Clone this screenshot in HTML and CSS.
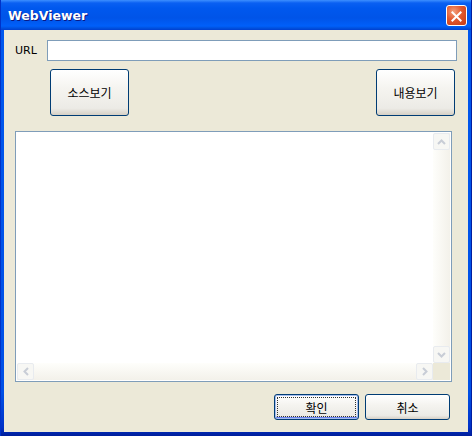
FILE: index.html
```html
<!DOCTYPE html>
<html lang="ko">
<head>
    <meta charset="UTF-8">
    <title>WebViewer</title>
    <link rel="stylesheet" href="styles.css">
</head>
<body>
    <div class="window">
        <div class="titlebar">
            <span class="title">WebViewer</span>
            <span class="close-button">
                <svg width="21" height="21" viewBox="0 0 21 21">
                    <path d="M6 6 L15 15 M15 6 L6 15" stroke="#fff" stroke-width="2.2" stroke-linecap="square"/>
                </svg>
            </span>
        </div>

        <div class="client">
            <div class="url-row">
                <span class="url-label">URL</span>
                <div class="url-input"></div>
            </div>

            <div class="view-row">
                <button class="btn btn-view">소스보기</button>
                <button class="btn btn-view">내용보기</button>
            </div>

            <div class="viewer">
                <div class="viewer-body"></div>
                <div class="vscroll">
                    <span class="arrow">
                        <svg width="9" height="6" viewBox="0 0 9 6"><path d="M1 5 L4.5 1.5 L8 5" fill="none" stroke="#c8cdd6" stroke-width="2"/></svg>
                    </span>
                    <span class="track"></span>
                    <span class="arrow">
                        <svg width="9" height="6" viewBox="0 0 9 6"><path d="M1 1 L4.5 4.5 L8 1" fill="none" stroke="#c8cdd6" stroke-width="2"/></svg>
                    </span>
                </div>
                <div class="hscroll">
                    <span class="arrow">
                        <svg width="6" height="9" viewBox="0 0 6 9"><path d="M5 1 L1.5 4.5 L5 8" fill="none" stroke="#c8cdd6" stroke-width="2"/></svg>
                    </span>
                    <span class="track"></span>
                    <span class="arrow">
                        <svg width="6" height="9" viewBox="0 0 6 9"><path d="M1 1 L4.5 4.5 L1 8" fill="none" stroke="#c8cdd6" stroke-width="2"/></svg>
                    </span>
                </div>
                <div class="corner"></div>
            </div>

            <div class="actions">
                <button class="btn btn-action btn-default"><span class="focus">확인</span></button>
                <button class="btn btn-action"><span class="focus-none">취소</span></button>
            </div>
        </div>
    </div>
</body>
</html>
```

FILE: styles.css
```css
* {
    margin: 0;
    padding: 0;
    box-sizing: border-box;
}

body {
    width: 472px;
    height: 436px;
    overflow: hidden;
    background-color: #ece9d8;
    font-family: "DejaVu Sans", sans-serif;
}

.window {
    display: flex;
    flex-direction: column;
    width: 472px;
    height: 436px;
    background: linear-gradient(to bottom, #0058ee 0%, #0050e6 90%, #0032c8 98%, #001e9a 100%);
    border-left: 1px solid #0032c8;
    border-right: 1px solid #001ea0;
}

.titlebar {
    display: flex;
    align-items: center;
    justify-content: space-between;
    height: 30px;
    padding: 0 4px 0 7px;
    background: linear-gradient(to bottom,
        #3d8fff 0px, #0a60f2 3px, #0058ee 8px, #0054e8 18px, #0060fa 26px, #0052e0 28px, #003fd0 30px);
}

.title {
    color: #fff;
    font-family: "DejaVu Sans", sans-serif;
    font-weight: bold;
    font-size: 12.5px;
    text-shadow: 1px 1px 0 #0a1883;
}

.close-button {
    display: flex;
    width: 21px;
    height: 21px;
    border: 1px solid #fff;
    border-radius: 3px;
    background: radial-gradient(circle at 35% 30%, #f3a07c 0%, #e2582f 45%, #c63a12 100%);
}

.client {
    flex: 1;
    display: flex;
    flex-direction: column;
    margin: 0 3px 4px 3px;
    padding-top: 10px;
    background-color: #ece9d8;
}

.url-row {
    display: flex;
    align-items: center;
    height: 21px;
    margin: 0 11px 0 11px;
}

.url-label {
    width: 32px;
    font-size: 11px;
    color: #000;
}

.url-input {
    flex: 1;
    height: 21px;
    border: 1px solid #7f9db9;
    background-color: #fff;
}

.btn {
    border: 1px solid #003c74;
    border-radius: 3px;
    background: linear-gradient(to bottom, #ffffff 0%, #f5f4f0 40%, #ecebe6 85%, #d6d0c5 100%);
    color: #000;
    font-family: "Noto Sans CJK KR", sans-serif;
    font-size: 12px;
}

.view-row {
    display: flex;
    justify-content: space-between;
    margin: 8px 13px 0 46px;
}

.btn-view {
    width: 79px;
    height: 47px;
}

.viewer {
    display: grid;
    grid-template-columns: 1fr 17px;
    grid-template-rows: 1fr 17px;
    height: 251px;
    margin: 15px 16px 0 11px;
    padding: 1px;
    border: 1px solid #7f9db9;
    background-color: #fff;
}

.vscroll {
    display: flex;
    flex-direction: column;
    background: linear-gradient(to right, #fefefb, #f3f1ea);
}

.hscroll {
    display: flex;
    background: linear-gradient(to bottom, #fefefb, #f3f1ea);
}

.track {
    flex: 1;
}

.arrow {
    display: flex;
    align-items: center;
    justify-content: center;
    width: 17px;
    height: 17px;
    border: 1px solid #e8ebef;
    border-radius: 2px;
    background-color: #f7f7f4;
}

.corner {
    background-color: #ece9d8;
}

.actions {
    display: flex;
    justify-content: flex-end;
    gap: 6px;
    margin: 12px 18px 0 0;
}

.btn-action {
    display: flex;
    width: 85px;
    height: 26px;
    padding: 2px;
}

.btn-default {
    box-shadow: inset 0 0 0 1px #a5bdf0, inset 0 -1px 0 1px #6982ee;
}

.focus,
.focus-none {
    display: flex;
    flex: 1;
    align-items: center;
    justify-content: center;
    border: 1px dotted transparent;
}

.focus {
    border-color: #333;
}
```
